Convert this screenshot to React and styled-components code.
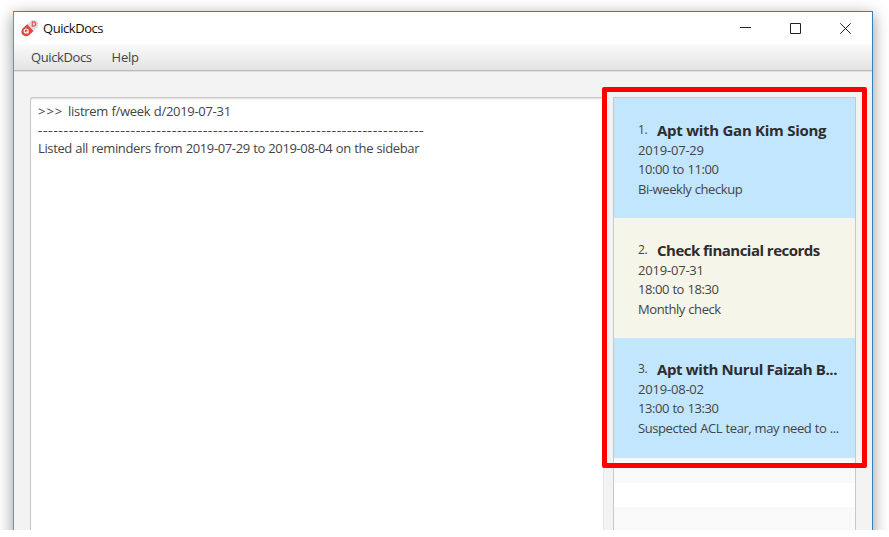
import React from "react";
import styled, { createGlobalStyle } from "styled-components";

const Global = createGlobalStyle`
  * { box-sizing: border-box; }
  html, body { margin: 0; background: #fff; overflow: hidden; }
`;

const Stage = styled.div`
  width: 889px;
  height: 530px;
  padding: 11px 0 0 13px;
  overflow: hidden;
  font-family: "Open Sans", "Noto Sans", sans-serif;
  color: #444;
`;

const Window = styled.div`
  width: 860px;
  height: 640px;
  border: 1px solid #3582bd;
  border-left-color: #5b97c4;
  background: #f3f3f3;
  box-shadow: 0 4px 15px rgba(0, 0, 0, 0.42);
`;

const TitleBar = styled.header`
  height: 32px;
  display: flex;
  align-items: center;
  padding-left: 7px;
  background: #fff;
`;

const Line = styled.div`
  font-size: ${(p) => p.$size || 13}px;
  font-weight: ${(p) => p.$weight || 400};
  line-height: ${(p) => p.$height || 19}px;
  letter-spacing: ${(p) => p.$track ?? -0.37}px;
  word-spacing: 0.4px;
  white-space: pre;
`;

const Prompt = styled.span`
  letter-spacing: 1px;
`;

const Dashes = styled(Line)`
  -webkit-text-stroke: 0.25px #444;
`;

const Title = styled(Line)`
  flex: 1;
  margin-left: 4px;
  color: #111;
`;

const Controls = styled.div`
  display: flex;
  gap: 39px;
  margin-right: 21px;
`;

const MenuBar = styled.nav`
  height: 27px;
  display: flex;
  gap: 20px;
  padding: 4px 0 0 17px;
  background: linear-gradient(#fafafa, #e3e3e3);
  border-bottom: 1px solid #bcbcbc;
  box-shadow: 0 1px 0 #dedede;
`;

const Content = styled.main`
  display: flex;
  gap: 9px;
  padding: 26px 16px 0;
`;

const Output = styled.section`
  width: 574px;
  height: 520px;
  padding: 4px 0 0 7px;
  background: #fff;
  border: 1px solid #c8c8c8;
  border-radius: 3px 3px 0 0;
  border-right-color: #e6e6e6;
  box-shadow: inset 0 2px 2px -1px #ddd;
`;

const SideFrame = styled.aside`
  position: relative;
  width: 243px;
`;

const List = styled.div`
  height: 520px;
  border: 1px solid #c8c8c8;
  background: #fff;
`;

const Card = styled.article`
  height: 120px;
  padding: ${(p) => p.$top}px 0 0 24px;
  background: ${(p) => p.$bg};
`;

const CardHead = styled.div`
  display: flex;
  height: 21px;
`;

const Index = styled(Line)`
  width: 19px;
`;

const Heading = styled(Line)`
  color: #2d2d2d;
  word-spacing: 0;
`;

const Stripe = styled.div`
  height: ${(p) => p.$h}px;
  background: ${(p) => p.$bg};
`;

const Highlight = styled.div`
  position: absolute;
  left: -11px;
  top: -10px;
  width: 265px;
  height: 381px;
  border: 5px solid #f00;
  border-radius: 2px;
`;

const Pill = () => (
  <svg width="18" height="18" viewBox="0 0 18 18">
    <g transform="rotate(-43 9 9)">
      <rect x="-1" y="4.4" width="20" height="9.2" rx="4.6" fill="#dedede" />
      <path d="M9.5 4.4H3.6a4.6 4.6 0 0 0 0 9.2H9.5z" fill="#dc4a40" />
    </g>
    <circle cx="5.2" cy="12" r="2" fill="none" stroke="#fff" strokeWidth="1.1" />
    <path d="M5.6 12.4l1.8 1.8" stroke="#fff" strokeWidth="1.1" />
    <path d="M11.3 2.8v4.4h1.2a2.2 2.2 0 0 0 0-4.4z" fill="none" stroke="#dc5a50" strokeWidth="1.2" />
  </svg>
);

const reminders = [
  { title: "Apt with Gan Kim Siong", date: "2019-07-29", time: "10:00 to 11:00", note: "Bi-weekly checkup", bg: "#c2e6fd", track: -0.27, top: 22 },
  { title: "Check financial records", date: "2019-07-31", time: "18:00 to 18:30", note: "Monthly check", bg: "#f5f5e9", track: -0.52, top: 22 },
  { title: "Apt with Nurul Faizah B...", date: "2019-08-02", time: "13:00 to 13:30", note: "Suspected ACL tear, may need to ...", bg: "#c2e6fd", track: -0.38, top: 21 },
];

export default function App() {
  return (
    <>
      <Global />
      <Stage>
        <Window>
          <TitleBar>
            <Pill />
            <Title $track={-0.45}>QuickDocs</Title>
            <Controls>
              <svg width="11" height="11" viewBox="0 0 11 11"><path d="M0 4.5h11" stroke="#222" /></svg>
              <svg width="11" height="11" viewBox="0 0 11 11"><path d="M.5.5h10v10H.5z" fill="none" stroke="#222" /></svg>
              <svg width="11" height="11" viewBox="0 0 11 11"><path d="M.3.3l10.4 10.4M10.7.3L.3 10.7" stroke="#222" /></svg>
            </Controls>
          </TitleBar>
          <MenuBar>
            <Line $track={-0.4}>QuickDocs</Line>
            <Line $track={-0.2}>Help</Line>
          </MenuBar>
          <Content>
            <Output>
              <Line $track={-0.3}><Prompt>{">>> "}</Prompt>listrem f/week d/2019-07-31</Line>
              <Dashes $height={18} $track={0.97}>{"-".repeat(75)}</Dashes>
              <Line>Listed all reminders from 2019-07-29 to 2019-08-04 on the sidebar</Line>
            </Output>
            <SideFrame>
              <List>
                {reminders.map((r, i) => (
                  <Card key={r.title} $bg={r.bg} $top={r.top}>
                    <CardHead>
                      <Index $size={12}>{i + 1}.</Index>
                      <Heading $size={15} $weight={700} $track={r.track} $height={21}>{r.title}</Heading>
                    </CardHead>
                    <Line $track={-0.2}>{r.date}</Line>
                    <Line $track={-0.42}>{r.time}</Line>
                    <Line $height={20} $track={-0.42}>{r.note}</Line>
                  </Card>
                ))}
                <Stripe $h={25} $bg="#f9f9f9" />
                <Stripe $h={24} $bg="#fff" />
                <Stripe $h={40} $bg="#f9f9f9" />
              </List>
              <Highlight />
            </SideFrame>
          </Content>
        </Window>
      </Stage>
    </>
  );
}
